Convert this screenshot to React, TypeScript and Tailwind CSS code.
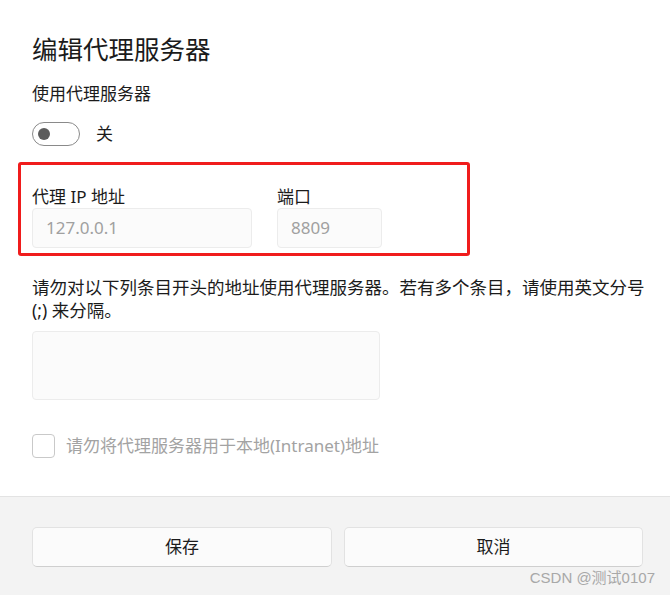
// 编辑代理服务器 — Windows 11 风格的代理设置对话框

const FONT = '"Noto Sans", "Noto Sans CJK SC", sans-serif';

function Toggle() {
  return (
    <div className="flex items-center gap-4">
      <div className="w-[48px] h-[24px] rounded-full border border-[#8a8a8a] bg-white flex items-center pl-[5px]">
        <div className="w-[12px] h-[12px] rounded-full bg-[#5c5c5c]" />
      </div>
      <span className="text-[17px] leading-[24px] text-[#1b1b1b]">关</span>
    </div>
  );
}

function Field({ label, value, width }: { label: string; value: string; width: string }) {
  return (
    <div className="flex flex-col">
      <span className="text-[17px] leading-[22px] text-[#1b1b1b]">{label}</span>
      <div className={`${width} h-[40px] rounded-[4px] border border-[#ececec] bg-[#fbfbfb] flex items-center px-[13px] text-[17px] text-[#a0a0a0]`}>
        {value}
      </div>
    </div>
  );
}

export default function App() {
  return (
    <div className="relative w-[670px] h-[595px] flex flex-col bg-white overflow-hidden" style={{ fontFamily: FONT }}>
      <div className="flex-1 flex flex-col pl-[32px] pt-[33px]">
        <h1 className="text-[25.5px] leading-[32px] font-normal text-[#1b1b1b]">编辑代理服务器</h1>
        <span className="mt-[17px] text-[17px] leading-[24px] text-[#1b1b1b]">使用代理服务器</span>
        <div className="mt-[16px]">
          <Toggle />
        </div>

        <div className="mt-[16px] ml-[-14px] w-[452px] h-[94px] border-[3px] border-[#f01c1c] rounded-[3px] pl-[11px] pt-[21px] flex gap-[25px]">
          <Field label="代理 IP 地址" value="127.0.0.1" width="w-[220px]" />
          <Field label="端口" value="8809" width="w-[105px]" />
        </div>

        <p className="mt-[20px] text-[17.5px] leading-[23px] text-[#1b1b1b]">
          请勿对以下列条目开头的地址使用代理服务器。若有多个条目，请使用英文分号
          <br />
          (;) 来分隔。
        </p>

        <div className="mt-[9px] w-[348px] h-[69px] rounded-[4px] border border-[#ececec] bg-[#fbfbfb]" />

        <div className="mt-[34px] flex items-center gap-[11px]">
          <div className="w-[23px] h-[24px] rounded-[4px] border border-[#c9c9c9] bg-white" />
          <span className="text-[17px] leading-[24px] text-[#a3a3a3]">请勿将代理服务器用于本地(Intranet)地址</span>
        </div>
      </div>

      <div className="h-[99px] shrink-0 border-t border-[#e3e3e3] bg-[#f3f3f3] pl-[32px] pt-[30px] flex gap-[12px]">
        <button type="button" className="w-[300px] h-[40px] rounded-[5px] border border-[#e2e2e2] border-b-[#cfcfcf] bg-[#fbfbfb] text-[17px] text-[#1b1b1b]">
          保存
        </button>
        <button type="button" className="w-[299px] h-[40px] rounded-[5px] border border-[#e2e2e2] border-b-[#cfcfcf] bg-[#fbfbfb] text-[17px] text-[#1b1b1b]">
          取消
        </button>
      </div>

      {/* CSDN 水印 */}
      <span className="absolute right-[15px] bottom-[7px] text-[15px] leading-[20px] text-[#a8a8a8]" style={{ fontFamily: '"Liberation Sans", "Noto Sans CJK SC", sans-serif' }}>
        CSDN @测试0107
      </span>
    </div>
  );
}
